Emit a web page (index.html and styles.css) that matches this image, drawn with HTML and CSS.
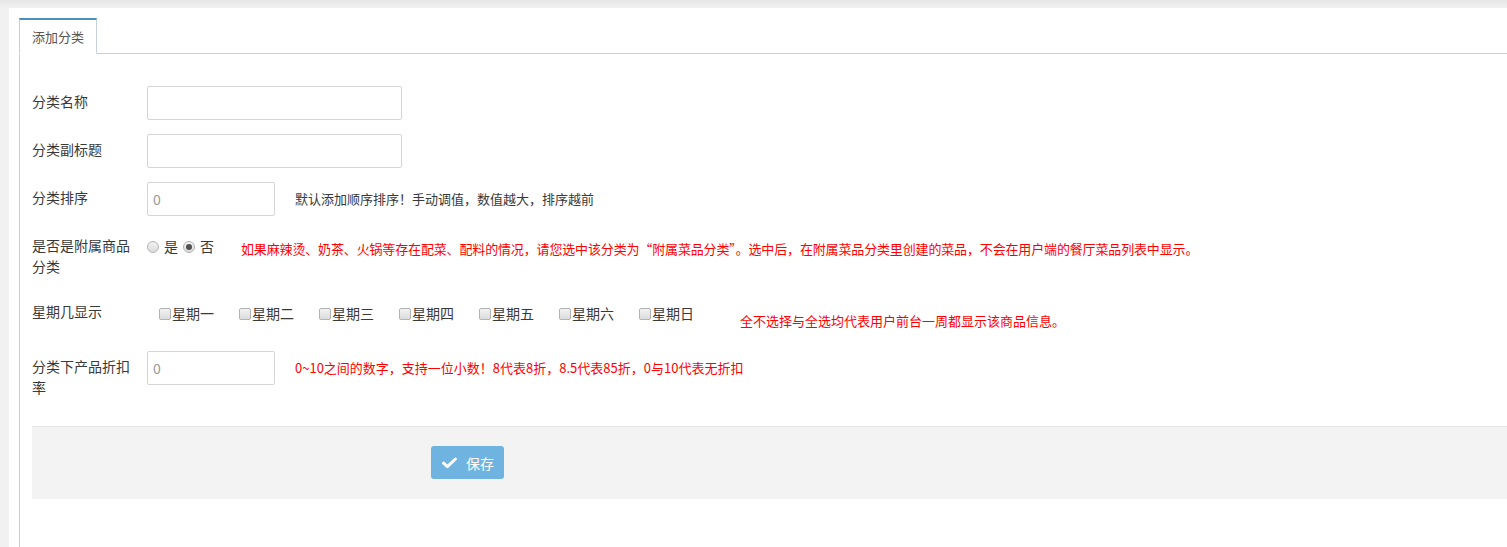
FILE: index.html
```html
<!DOCTYPE html>
<html>
<head>
<meta charset="utf-8">
<title>添加分类</title>
<link rel="stylesheet" href="styles.css">
</head>
<body>
<div class="page">
  <div class="tabs">
    <ul class="tab-nav">
      <li class="active">添加分类</li>
    </ul>
    <div class="tab-content">
      <form class="form">
        <div class="form-group">
          <label class="control-label">分类名称</label>
          <input type="text" class="input-wide">
        </div>

        <div class="form-group">
          <label class="control-label">分类副标题</label>
          <input type="text" class="input-wide">
        </div>

        <div class="form-group">
          <label class="control-label">分类排序</label>
          <input type="text" class="input-short" placeholder="0">
          <span class="help">默认添加顺序排序！手动调值，数值越大，排序越前</span>
        </div>

        <div class="form-group radio-group">
          <label class="control-label">是否是附属商品分类</label>
          <div class="radios">
            <label><input type="radio" name="sub">是</label>
            <label><input type="radio" name="sub" checked>否</label>
          </div>
          <span class="help red radio-help">如果麻辣烫、奶茶、火锅等存在配菜、配料的情况，请您选中该分类为“附属菜品分类”。选中后，在附属菜品分类里创建的菜品，不会在用户端的餐厅菜品列表中显示。</span>
        </div>

        <div class="form-group week-group">
          <label class="control-label">星期几显示</label>
          <div class="weekdays">
            <label><input type="checkbox">星期一</label>
            <label><input type="checkbox">星期二</label>
            <label><input type="checkbox">星期三</label>
            <label><input type="checkbox">星期四</label>
            <label><input type="checkbox">星期五</label>
            <label><input type="checkbox">星期六</label>
            <label><input type="checkbox">星期日</label>
          </div>
          <span class="help red week-help">全不选择与全选均代表用户前台一周都显示该商品信息。</span>
        </div>

        <div class="form-group">
          <label class="control-label">分类下产品折扣率</label>
          <input type="text" class="input-short" placeholder="0">
          <span class="help red">0~10之间的数字，支持一位小数！8代表8折，8.5代表85折，0与10代表无折扣</span>
        </div>

        <div class="form-actions">
          <button type="button" class="btn-save">
            <svg class="icon-check" viewBox="0 0 15 12" width="15" height="12"><path d="M1.6 6.2 L5.4 9.6 L13.4 2" fill="none" stroke="#fff" stroke-width="3" stroke-linecap="round" stroke-linejoin="round"/></svg>
            保存
          </button>
        </div>
      </form>
    </div>
  </div>
</div>
</body>
</html>
```

FILE: styles.css
```css
html, body {
  margin: 0;
  padding: 0;
}

body {
  font-family: "Noto Sans CJK SC", "Liberation Sans", sans-serif;
  font-size: 14px;
  color: #393939;
  background: linear-gradient(#e6e6e6, #f1f1f1 8px);
  overflow: hidden;
  height: 547px;
}

.page {
  margin: 8px 0 0 9px;
  background: #fff;
  height: 539px;
  width: 1520px;
}

.tabs {
  padding: 10px 0 0 10px;
}

.tab-nav {
  list-style: none;
  margin: 0 0 -1px 0;
  padding: 0;
  display: flex;
}

.tab-nav li {
  height: 33px;
  line-height: 33px;
  padding: 0 12px;
  font-size: 13px;
  border: 1px solid #c5d0dc;
  border-top: 2px solid #4c8fbd;
  border-bottom-color: #fff;
  background: #fff;
  color: #555;
  position: relative;
}

.tab-content {
  border-left: 1px solid #c5d0dc;
  border-top: 1px solid #c5d0dc;
  padding: 32px 0 0 12px;
  height: 493px;
}

.form-group {
  display: flex;
  align-items: flex-start;
  margin-bottom: 14px;
}

.control-label {
  width: 100px;
  margin-right: 15px;
  padding-top: 5px;
  line-height: 21px;
  flex-shrink: 0;
}

input[type="text"] {
  height: 34px;
  box-sizing: border-box;
  border: 1px solid #d5d5d5;
  border-radius: 2px;
  padding: 0 5px;
  font-family: inherit;
  font-size: 14px;
  color: #555;
  margin: 0;
}

input[type="text"]::placeholder {
  color: #999;
}

.input-wide {
  width: 255px;
}

.input-short {
  width: 128px;
}

.help {
  margin-left: 20px;
  line-height: 34px;
  font-size: 13px;
  color: #393939;
  white-space: nowrap;
}

.red {
  color: #f00;
}

/* radios and checkboxes drawn in the old grey style */
input[type="radio"],
input[type="checkbox"] {
  appearance: none;
  -webkit-appearance: none;
  box-sizing: border-box;
  flex-shrink: 0;
  background: linear-gradient(#f2f2f2, #dcdcdc);
  border: 1px solid #b3b3b3;
}

input[type="radio"] {
  width: 12px;
  height: 12px;
  border-radius: 50%;
  position: relative;
}

input[type="radio"]:checked::after {
  content: "";
  position: absolute;
  left: 2px;
  top: 2px;
  width: 6px;
  height: 6px;
  border-radius: 50%;
  background: #505050;
}

input[type="checkbox"] {
  width: 12px;
  height: 12px;
  border-radius: 2px;
}

.radio-group {
  min-height: 49px;
}

.radios {
  display: flex;
  padding-top: 6px;
  line-height: 21px;
}

.radios label {
  display: flex;
  align-items: center;
  margin-right: 5px;
}

.radios input {
  margin: 0 5px 0 0;
}

.radio-help {
  margin-left: 22px;
  line-height: 21px;
  padding-top: 8px;
  letter-spacing: -0.15px;
}

.week-group {
  height: 44px;
}

.week-group .control-label {
  padding-top: 8px;
}

.weekdays {
  display: flex;
  padding: 10px 0 0 12px;
  line-height: 21px;
}

.weekdays label {
  display: flex;
  align-items: center;
  width: 80px;
  flex-shrink: 0;
}

.weekdays input {
  margin: 0 1px 0 0;
}

.week-help {
  margin-left: 21px;
  padding-top: 17px;
  line-height: 21px;
}

.form-actions {
  margin-top: 28px;
  height: 53px;
  padding: 19px 0 0 399px;
  background: #f3f3f3;
  border-top: 1px solid #e5e5e5;
}

.btn-save {
  width: 73px;
  height: 33px;
  border: none;
  border-radius: 3px;
  background: #6fb3e0;
  color: #fff;
  font-family: inherit;
  font-size: 14px;
  display: flex;
  align-items: center;
  justify-content: center;
  gap: 9px;
  padding: 0 0 0 1px;
  cursor: pointer;
}

.icon-check {
  display: block;
}
```
